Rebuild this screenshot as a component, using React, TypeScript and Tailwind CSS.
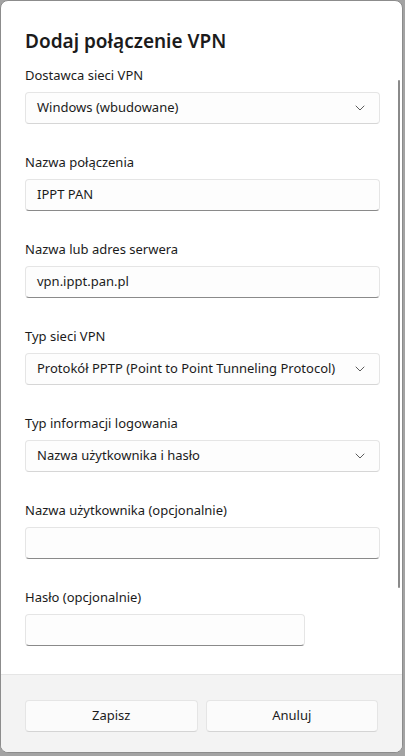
import React from 'react';

const FONT = { fontFamily: '"Noto Sans", "Open Sans", Arial, sans-serif' };

function Chevron() {
  return (
    <svg width="10" height="6" viewBox="0 0 10 6" className="shrink-0">
      <path d="M1 1 L5 5 L9 1" fill="none" stroke="#5c5c5c" strokeWidth="1" strokeLinecap="round" strokeLinejoin="round" />
    </svg>
  );
}

function Field({ label, children }: { label: string; children: React.ReactNode }) {
  return (
    <div className="flex flex-col">
      <div className="h-5 text-[13px] leading-5 text-[#1b1b1b]">{label}</div>
      <div className="mt-[7px]">{children}</div>
    </div>
  );
}

function Select({ value }: { value: string }) {
  return (
    <div className="flex h-8 w-[355px] items-center justify-between gap-2 rounded-[4px] border border-[#e5e5e5] border-b-[#d6d6d6] bg-[#fdfdfd] pl-[11px] pr-[14px] text-[13px] text-[#1b1b1b]">
      <span className="whitespace-nowrap">{value}</span>
      <Chevron />
    </div>
  );
}

function Input({ value, width = 'w-[355px]' }: { value?: string; width?: string }) {
  return (
    <div className={`flex h-8 ${width} items-center rounded-[4px] border border-[#e5e5e5] border-b-[#8a8a8a] bg-[#fdfdfd] pl-[11px] text-[13px] text-[#1b1b1b]`}>
      {value}
    </div>
  );
}

export default function App() {
  return (
    <div className="h-[756px] w-[405px] bg-[#a3a3a3] pr-[2px] pb-[3px]" style={FONT}>
      <div className="relative flex h-full flex-col overflow-hidden rounded-lg border border-[#8c8c8c] bg-white">
        <div className="flex flex-1 flex-col gap-[28px] px-6 pt-[26px]">
          <div className="flex flex-col gap-[10px]">
            <h1 className="h-7 text-[19px] font-semibold leading-7 text-[#1b1b1b]">Dodaj połączenie VPN</h1>
            <Field label="Dostawca sieci VPN">
              <Select value="Windows (wbudowane)" />
            </Field>
          </div>
          <Field label="Nazwa połączenia">
            <Input value="IPPT PAN" />
          </Field>
          <Field label="Nazwa lub adres serwera">
            <Input value="vpn.ippt.pan.pl" />
          </Field>
          <Field label="Typ sieci VPN">
            <Select value="Protokół PPTP (Point to Point Tunneling Protocol)" />
          </Field>
          <Field label="Typ informacji logowania">
            <Select value="Nazwa użytkownika i hasło" />
          </Field>
          <Field label="Nazwa użytkownika (opcjonalnie)">
            <Input />
          </Field>
          <Field label="Hasło (opcjonalnie)">
            <Input width="w-[280px]" />
          </Field>
        </div>
        <div className="flex h-[78px] gap-2 border-t border-[#e5e5e5] bg-[#f3f3f3] px-6 pt-[25px]">
          <button className="h-8 flex-1 rounded-[4px] border border-[#e5e5e5] border-b-[#d4d4d4] bg-[#fbfbfb] text-[13px] text-[#1b1b1b]">Zapisz</button>
          <button className="h-8 flex-1 rounded-[4px] border border-[#e5e5e5] border-b-[#d4d4d4] bg-[#fbfbfb] text-[13px] text-[#1b1b1b]">Anuluj</button>
        </div>
        <div className="absolute right-[2px] top-[79px] h-[508px] w-[2px] rounded-full bg-[#8a8a8a]" />
      </div>
    </div>
  );
}
